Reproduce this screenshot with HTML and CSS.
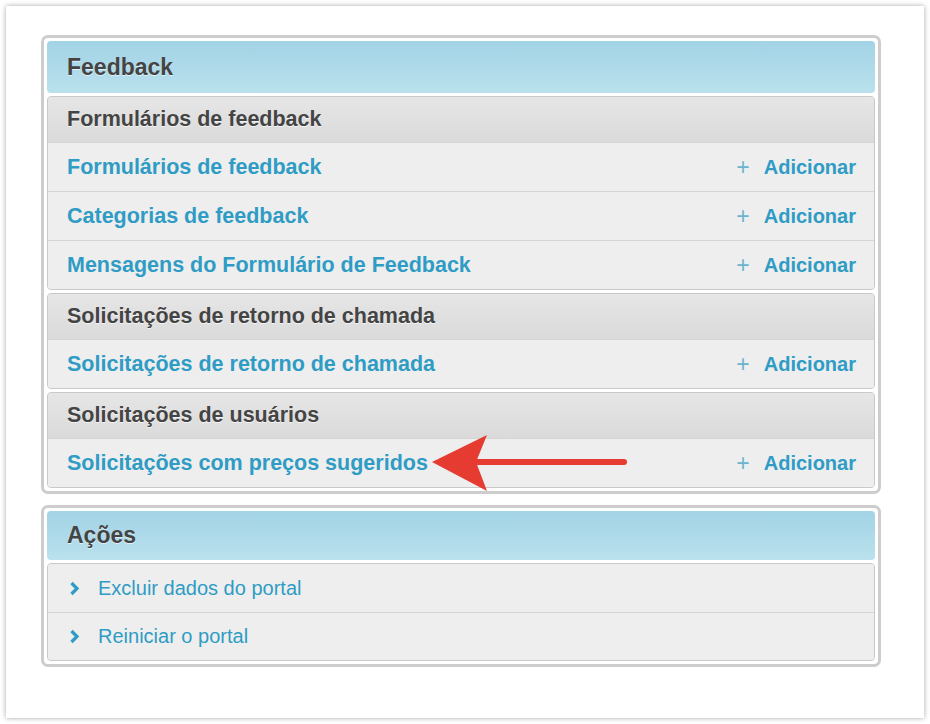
FILE: index.html
```html
<!DOCTYPE html>
<html lang="pt-BR">
<head>
  <meta charset="UTF-8">
  <meta name="viewport" content="width=device-width, initial-scale=1.0">
  <title>Feedback</title>
  <link rel="stylesheet" href="styles.css">
</head>
<body>
  <div class="pagina">
    <div class="modulo">
      <div class="modulo-titulo">Feedback</div>

      <div class="secao">
        <div class="secao-titulo">Formulários de feedback</div>
        <div class="linha">
          <a class="link">Formulários de feedback</a>
          <a class="adicionar"><span class="mais">+</span>Adicionar</a>
        </div>
        <div class="linha">
          <a class="link">Categorias de feedback</a>
          <a class="adicionar"><span class="mais">+</span>Adicionar</a>
        </div>
        <div class="linha">
          <a class="link">Mensagens do Formulário de Feedback</a>
          <a class="adicionar"><span class="mais">+</span>Adicionar</a>
        </div>
      </div>

      <div class="secao">
        <div class="secao-titulo">Solicitações de retorno de chamada</div>
        <div class="linha">
          <a class="link">Solicitações de retorno de chamada</a>
          <a class="adicionar"><span class="mais">+</span>Adicionar</a>
        </div>
      </div>

      <div class="secao">
        <div class="secao-titulo">Solicitações de usuários</div>
        <div class="linha">
          <a class="link">Solicitações com preços sugeridos</a>
          <a class="adicionar"><span class="mais">+</span>Adicionar</a>
        </div>
      </div>

      <!-- seta vermelha apontando para o item -->
      <svg class="seta" width="200" height="60" viewBox="0 0 200 60">
        <line x1="40" y1="28" x2="192" y2="28" stroke="#e53b30" stroke-width="6" stroke-linecap="round"/>
        <polygon points="0,28 55,1 44,28 55,57" fill="#e53b30"/>
      </svg>
    </div>

    <div class="modulo">
      <div class="modulo-titulo acoes">Ações</div>
      <div class="secao">
        <div class="linha acao">
          <svg class="chevron" width="11" height="15" viewBox="0 0 11 15">
            <polyline points="2.5,2 8,7.5 2.5,13" fill="none" stroke="#2e9cc5" stroke-width="3.2"/>
          </svg>
          <a class="link-acao">Excluir dados do portal</a>
        </div>
        <div class="linha acao">
          <svg class="chevron" width="11" height="15" viewBox="0 0 11 15">
            <polyline points="2.5,2 8,7.5 2.5,13" fill="none" stroke="#2e9cc5" stroke-width="3.2"/>
          </svg>
          <a class="link-acao">Reiniciar o portal</a>
        </div>
      </div>
    </div>
  </div>
</body>
</html>
```

FILE: styles.css
```css
body {
  margin: 0;
  background-color: #fff;
  font-family: Arial, "Liberation Sans", Helvetica, sans-serif;
}
.pagina {
  margin: 6px;
  width: 918px;
  height: 712px;
  box-sizing: border-box;
  padding: 29px 0 0 35px;
  background-color: #fff;
  box-shadow: 0 0 5px rgba(0, 0, 0, 0.35);
}
.modulo {
  position: relative;
  width: 840px;
  box-sizing: border-box;
  border: 3px solid #cdcdcd;
  border-radius: 7px;
  padding: 3px;
  margin-bottom: 11px;
}
.modulo-titulo {
  height: 52px;
  box-sizing: border-box;
  padding-left: 20px;
  display: flex;
  align-items: center;
  border-radius: 4px;
  background: linear-gradient(#a2d3e6, #bae1ed);
  color: #444;
  font-size: 23px;
  font-weight: bold;
  text-shadow: 0 1px 0 rgba(255, 255, 255, 0.6);
}
.modulo-titulo.acoes {
  height: 49px;
  margin-bottom: 3px;
}
.secao {
  margin-top: 3px;
  border: 1px solid #c9c9c9;
  border-radius: 4px;
  background-color: #eee;
  overflow: hidden;
}
.secao-titulo {
  height: 45px;
  box-sizing: border-box;
  padding-left: 19px;
  display: flex;
  align-items: center;
  background: linear-gradient(#e6e6e6, #dadada);
  color: #444;
  font-size: 21.5px;
  font-weight: bold;
  text-shadow: 0 1px 0 rgba(255, 255, 255, 0.7);
}
.linha {
  height: 49px;
  box-sizing: border-box;
  border-top: 1px solid #d4d4d4;
  padding: 0 18px 0 19px;
  display: flex;
  align-items: center;
  justify-content: space-between;
  background-color: #eee;
}
.secao > .linha:first-child {
  border-top: none;
  height: 48px;
}
.link {
  color: #2e9cc5;
  font-size: 21.5px;
  font-weight: bold;
}
.adicionar {
  color: #2e9cc5;
  font-size: 20px;
  font-weight: bold;
  display: flex;
  align-items: center;
}
.mais {
  color: #6bb3cf;
  font-weight: normal;
  font-size: 23px;
  margin-right: 14px;
}
.acao {
  justify-content: flex-start;
  height: 48px;
  padding-left: 21px;
}
.chevron {
  margin-right: 18px;
}
.link-acao {
  color: #2e9cc5;
  font-size: 20px;
}
.seta {
  position: absolute;
  left: 388px;
  top: 396px;
}
```
